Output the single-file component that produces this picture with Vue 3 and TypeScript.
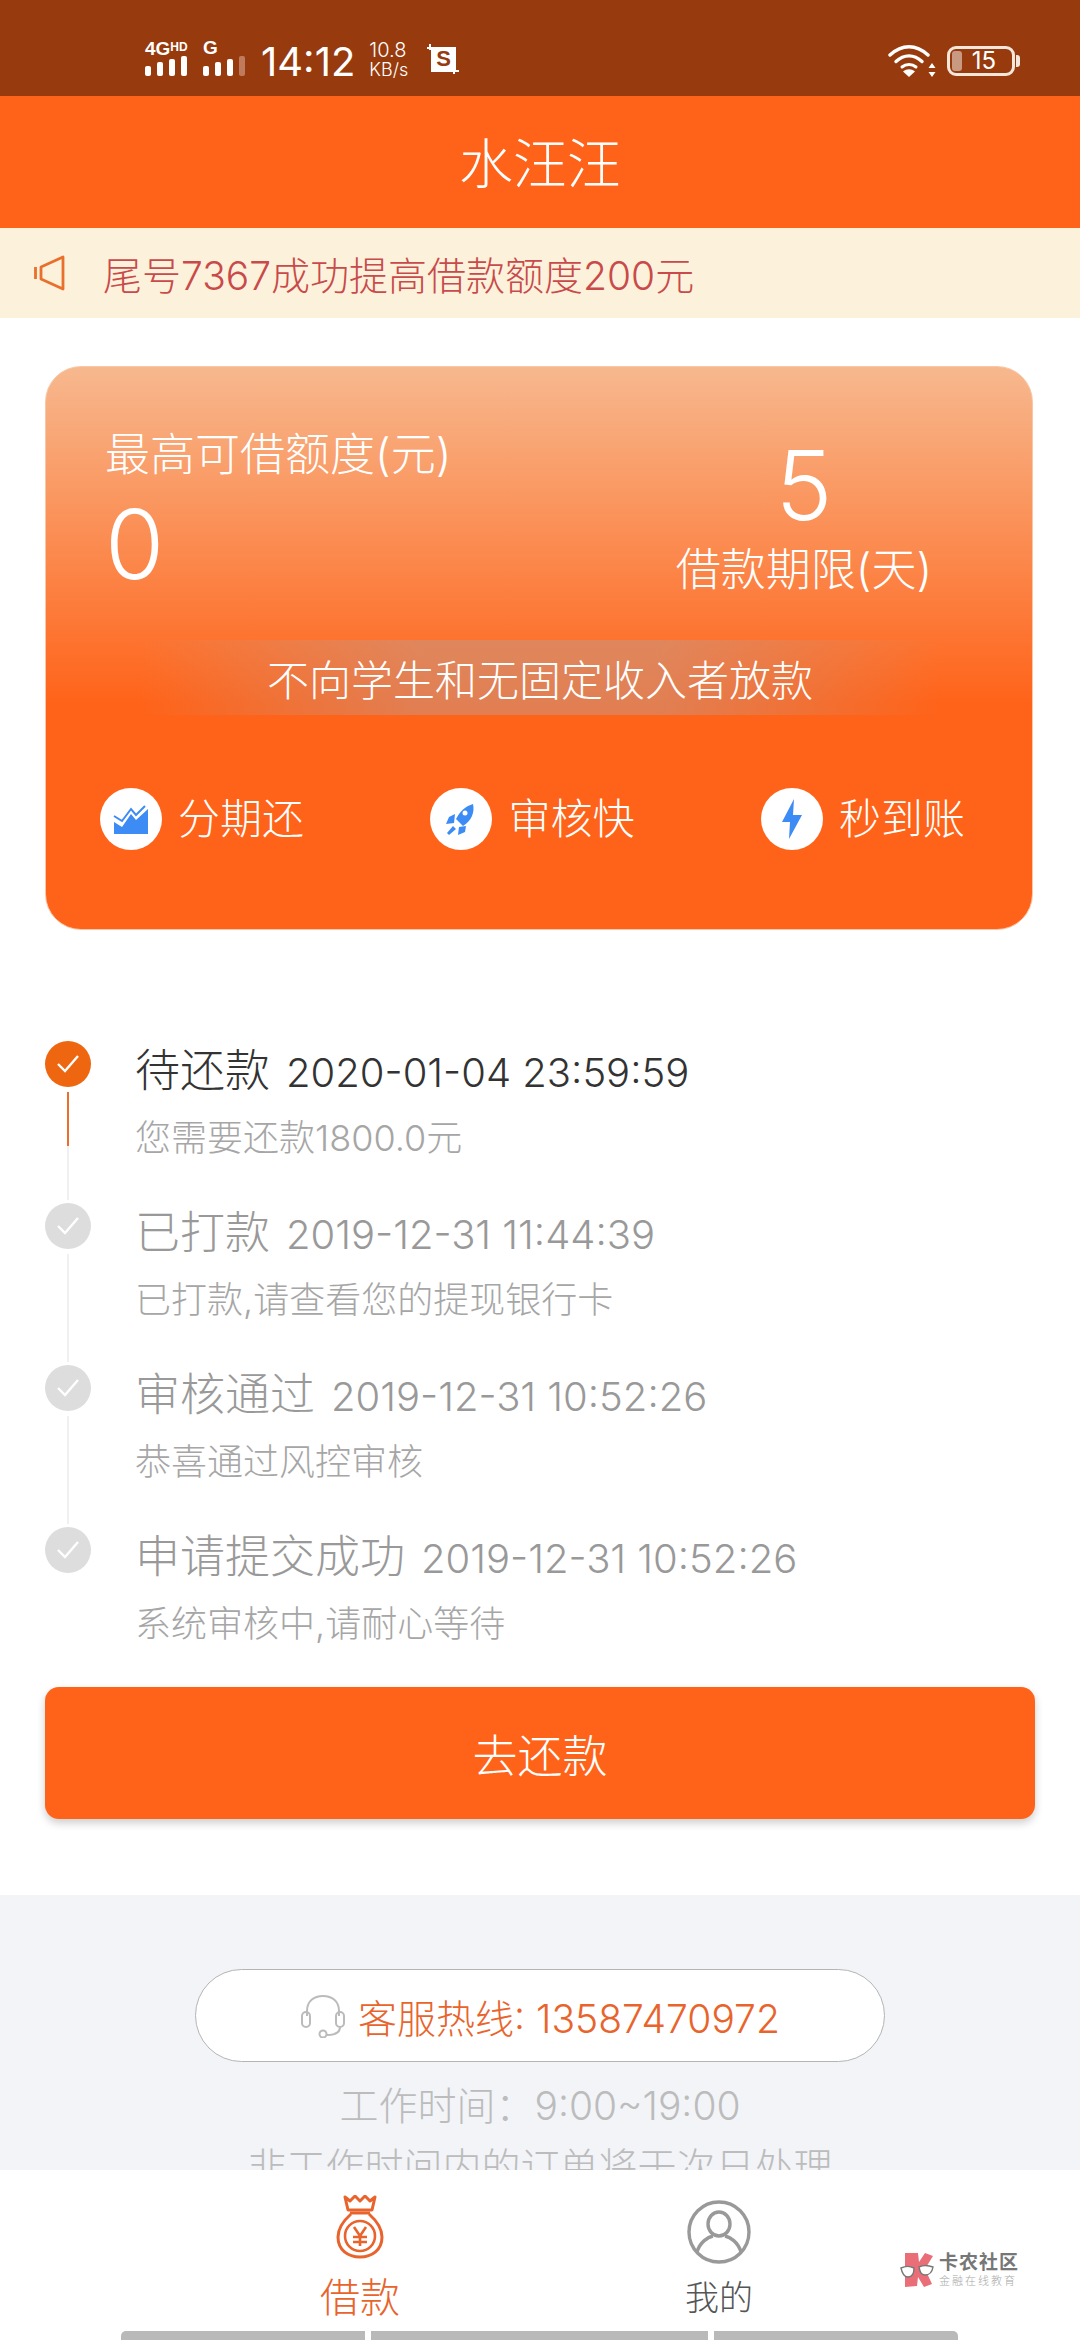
<template>
  <div class="phone">
    <div class="status-bar">
      <div class="signal">
        <div class="net"><span class="net-4g">4G</span><span class="net-hd">HD</span></div>
        <div class="bars">
          <i style="height: 10px"></i><i style="height: 14px"></i><i style="height: 17px"></i><i style="height: 20px"></i>
        </div>
      </div>
      <div class="signal signal-g">
        <div class="net"><span class="net-4g">G</span></div>
        <div class="bars">
          <i style="height: 10px"></i><i style="height: 14px"></i><i style="height: 17px"></i><i class="off" style="height: 20px"></i>
        </div>
      </div>
      <span class="clock">14:12</span>
      <div class="speed"><span>10.8</span><span class="unit">KB/s</span></div>
      <svg class="shot" width="34" height="32" viewBox="0 0 34 32">
        <path d="M5 3h25v25H5z" fill="#fff" />
        <path d="M1 4h6M4 0v6M28 30v-5M26 27h7" stroke="#fff" stroke-width="2" fill="none" />
        <text x="17.5" y="22" text-anchor="middle" class="shot-s">S</text>
      </svg>
      <div class="status-right">
        <svg width="48" height="34" viewBox="0 0 48 34">
          <path d="M2 11C14 0 28 0 40 11" stroke="#fff" stroke-width="3.4" fill="none" stroke-linecap="round" />
          <path d="M8 17.500C16 10 26 10 34 17.500" stroke="#fff" stroke-width="3.400" fill="none" stroke-linecap="round" />
          <path d="M14 23C18 19.500 24 19.500 28 23" stroke="#fff" stroke-width="3" fill="none" stroke-linecap="round" />
          <path d="M15 27.500C19 24.500 23 24.500 27 27.500L21 33z" fill="#fff" />
          <path d="M44 19l3.500 5h-7zM44 33l3.500-5h-7z" fill="#fff" />
        </svg>
        <div class="battery">
          <span class="battery-fill"></span>
          <span class="battery-num">15</span>
        </div>
        <span class="battery-cap"></span>
      </div>
    </div>

    <header class="title-bar">水汪汪</header>

    <div class="notice">
      <svg width="34" height="36" viewBox="0 0 34 36">
        <path d="M2.500 12v12M8 12L30 2v32L8 24z" fill="none" stroke="#e8702c" stroke-width="2.800" stroke-linejoin="round" />
      </svg>
      <span>尾号7367成功提高借款额度200元</span>
    </div>

    <main class="content">
      <section class="card">
        <div class="card-top">
          <div class="quota">
            <div class="card-label">最高可借额度(元)</div>
            <div class="card-num">0</div>
          </div>
          <div class="term">
            <div class="card-num">5</div>
            <div class="card-label">借款期限(天)</div>
          </div>
        </div>
        <div class="slogan">不向学生和无固定收入者放款</div>
        <div class="features">
          <div class="feature">
            <span class="feature-icon">
              <svg width="36" height="36" viewBox="0 0 36 36">
                <path d="M1 33V21l8 5 9-13 5 6 12-11v25z" fill="#3d8bf5" />
                <path d="M1 15l8 5 9-12 5 6 9-9" fill="none" stroke="#3d8bf5" stroke-width="2" />
              </svg>
            </span>
            <span>分期还</span>
          </div>
          <div class="feature">
            <span class="feature-icon">
              <svg width="36" height="36" viewBox="0 0 36 36">
                <path d="M30 3c2 9-2 17-10 22l-7-7C17 10 23 5 30 3z" fill="#3d8bf5" />
                <path d="M12 13l-6 3-3 7 8-1zM23 25l-1 6-7 3 1-8zM10 25l3 3-7 6-2-2z" fill="#3d8bf5" />
                <circle cx="22" cy="12" r="2.500" fill="#fff" />
              </svg>
            </span>
            <span>审核快</span>
          </div>
          <div class="feature">
            <span class="feature-icon">
              <svg width="36" height="44" viewBox="0 0 36 44">
                <path d="M20 2L8 25h8l-1 17 13-24h-9z" fill="#3d8bf5" />
              </svg>
            </span>
            <span>秒到账</span>
          </div>
        </div>
      </section>

      <ul class="timeline">
        <li v-for="(step, i) in steps" :key="step.name" class="step" :class="{ active: i === 0 }">
          <div class="rail">
            <span class="dot">
              <svg width="26" height="22" viewBox="0 0 26 22">
                <path d="M3 11l7 7L23 3" fill="none" stroke="#fff" stroke-width="2.400" />
              </svg>
            </span>
            <span v-if="i < steps.length - 1" class="line"></span>
          </div>
          <div class="step-body">
            <div class="step-head">
              <span class="step-name">{{ step.name }}</span>
              <span class="step-time">{{ step.time }}</span>
            </div>
            <div class="step-desc">{{ step.desc }}</div>
          </div>
        </li>
      </ul>

      <button class="repay">去还款</button>
    </main>

    <section class="service">
      <div class="hotline">
        <svg width="46" height="44" viewBox="0 0 46 44">
          <path d="M7 22V17C7 7 14 2 23 2s16 5 16 15v5" fill="none" stroke="#bbb" stroke-width="2" />
          <rect x="2" y="18" width="8" height="15" rx="4" fill="none" stroke="#bbb" stroke-width="2" />
          <rect x="36" y="18" width="8" height="15" rx="4" fill="none" stroke="#bbb" stroke-width="2" />
          <path d="M40 33c0 6-6 8-13 8" fill="none" stroke="#bbb" stroke-width="2" />
          <circle cx="23" cy="40" r="3.500" fill="none" stroke="#bbb" stroke-width="2" />
        </svg>
        <span>客服热线: 13587470972</span>
      </div>
      <p class="work-time">工作时间：9:00~19:00</p>
      <p class="work-time">非工作时间内的订单将于次日处理</p>
    </section>

    <nav class="tab-bar">
      <div class="tab tab-on">
        <svg width="48" height="64" viewBox="0 0 48 64">
          <path d="M9 2l5 4 5-5 5 5 5-5 5 5 5-4-3 13H12z" fill="none" stroke="#e8642c" stroke-width="3" stroke-linejoin="round" />
          <path d="M14 18h20" stroke="#e8642c" stroke-width="3" />
          <path d="M15 19C6 27 2 34 2 42c0 13 10 20 22 20s22-7 22-20c0-8-4-15-13-23" fill="none" stroke="#e8642c" stroke-width="3" />
          <circle cx="24" cy="41" r="15" fill="none" stroke="#e8642c" stroke-width="2.600" />
          <path d="M18 32l6 9 6-9M24 41v10M17 42h14M17 47h14" fill="none" stroke="#e8642c" stroke-width="2.600" />
        </svg>
        <span>借款</span>
      </div>
      <div class="tab tab-me">
        <svg width="64" height="64" viewBox="0 0 64 64">
          <circle cx="32" cy="32" r="30" fill="none" stroke="#999" stroke-width="3.400" />
          <ellipse cx="32" cy="24" rx="11" ry="12" fill="none" stroke="#999" stroke-width="3.400" />
          <path d="M10 52c3-10 11-15 16-16M54 52c-3-10-11-15-16-16" fill="none" stroke="#999" stroke-width="3.400" />
        </svg>
        <span>我的</span>
      </div>
    </nav>

    <div class="watermark">
      <svg width="34" height="36" viewBox="0 0 34 36">
        <path d="M5 1h13l1 9 6-9 8 3-8 13 7 15-8 3-6-10-1 9-12 1z" fill="#ea6e78" />
        <path d="M1 16c4-2 9-2 13 0 0 5-2 9-6 9-4 0-6-4-7-9zM19 15c4-2 9-2 14 0-1 6-4 8-8 8-4 0-5-3-6-8z" fill="#fff" stroke="#777" stroke-width="1.400" />
      </svg>
      <div class="watermark-text">
        <span class="wm-name">卡农社区</span>
        <span class="wm-sub">金融在线教育</span>
      </div>
    </div>

    <div class="gesture">
      <i class="g1"></i><i class="g2"></i><i class="g3"></i>
    </div>
  </div>
</template>

<script setup lang="ts">
interface Step {
  name: string;
  time: string;
  desc: string;
}

const steps: Array<Step> = [
  { name: "待还款", time: "2020-01-04 23:59:59", desc: "您需要还款1800.0元" },
  { name: "已打款", time: "2019-12-31 11:44:39", desc: "已打款,请查看您的提现银行卡" },
  { name: "审核通过", time: "2019-12-31 10:52:26", desc: "恭喜通过风控审核" },
  { name: "申请提交成功", time: "2019-12-31 10:52:26", desc: "系统审核中,请耐心等待" },
];
</script>

<style>
html,
body {
  margin: 0;
  background: #fff;
}
</style>

<style scoped>
.phone {
  position: relative;
  width: 1080px;
  height: 2340px;
  overflow: hidden;
  background: #fff;
  font-family: Inter, "Noto Sans CJK SC", sans-serif;
  font-weight: 300;
}

.status-bar {
  height: 96px;
  box-sizing: border-box;
  padding: 38px 60px 0 145px;
  display: flex;
  align-items: flex-start;
  background: #973b0e;
  color: #fff;
}

.signal {
  width: 46px;
}

.signal-g {
  margin-left: 12px;
  width: 48px;
}

.net {
  height: 19px;
  line-height: 19px;
  white-space: nowrap;
  font-family: "Liberation Sans", sans-serif;
  font-weight: 700;
}

.net-4g {
  font-size: 19px;
}

.net-hd {
  font-size: 12px;
  vertical-align: 4px;
}

.bars {
  display: flex;
  align-items: flex-end;
  gap: 6px;
  height: 20px;
  margin-top: -1px;
}

.bars i {
  width: 6px;
  border-radius: 2px;
  background: #fff;
}

.bars i.off {
  background: #c07a5c;
}

.clock {
  margin-left: 10px;
  font-size: 40px;
  line-height: 48px;
  font-weight: 400;
}

.speed {
  margin-left: 14px;
  display: flex;
  flex-direction: column;
  font-size: 20px;
  line-height: 19px;
  margin-top: 3px;
}

.speed .unit {
  font-size: 18px;
}

.shot {
  margin-left: 18px;
  margin-top: 6px;
}

.shot-s {
  font-family: "Liberation Sans", sans-serif;
  font-size: 22px;
  font-weight: 700;
  fill: #973b0e;
}

.status-right {
  margin-left: auto;
  display: flex;
  align-items: center;
  margin-top: 6px;
}

.battery {
  position: relative;
  margin-left: 11px;
  width: 68px;
  height: 30px;
  box-sizing: border-box;
  border: 3px solid #f5e6dc;
  border-radius: 9px;
  text-align: center;
  font-size: 24px;
  line-height: 24px;
  font-weight: 400;
}

.battery-fill {
  position: absolute;
  left: 2px;
  top: 2px;
  width: 10px;
  height: 20px;
  border-radius: 3px;
  background: #c89a82;
}

.battery-num {
  margin-left: 6px;
}

.battery-cap {
  width: 4px;
  height: 12px;
  margin-left: 1px;
  border-radius: 0 3px 3px 0;
  background: #f5e6dc;
}

.title-bar {
  height: 132px;
  padding-bottom: 4px;
  box-sizing: border-box;
  display: flex;
  align-items: center;
  justify-content: center;
  background: #ff6319;
  color: #fff;
  font-size: 54px;
}

.notice {
  height: 90px;
  box-sizing: border-box;
  padding: 0 0 0 33px;
  display: flex;
  align-items: center;
  gap: 36px;
  background: #fcf2dc;
  color: #c94a4a;
  font-size: 39px;
}

.content {
  padding: 48px 45px 0;
}

.card {
  box-sizing: border-box;
  width: 988px;
  height: 564px;
  padding: 58px 62px 0 59px;
  border-radius: 36px;
  border: 1px solid #f9c6a6;
  background: linear-gradient(180deg, #f7b88e 0%, #ff6319 60%, #ff6319 100%);
  color: #fff;
}

.card-top {
  display: flex;
  justify-content: space-between;
  height: 215px;
}

.card-label {
  font-size: 45px;
  line-height: 60px;
}

.card-num {
  font-size: 96px;
  line-height: 110px;
  font-weight: 300;
}

.quota .card-num {
  margin-top: 4px;
}

.term {
  width: 300px;
  margin-right: 16px;
  text-align: center;
  padding-top: 5px;
}

.slogan {
  height: 75px;
  margin: 0 30px 0 35px;
  display: flex;
  align-items: center;
  justify-content: center;
  font-size: 42px;
  background: linear-gradient(90deg, rgba(200, 150, 130, 0) 0%, rgba(200, 150, 130, 0.55) 35%, rgba(200, 150, 130, 0.55) 65%, rgba(200, 150, 130, 0) 100%);
}

.features {
  margin: 73px 0 0 -5px;
  display: flex;
  justify-content: space-between;
  width: 865px;
}

.feature {
  display: flex;
  align-items: center;
  gap: 16px;
  font-size: 42px;
  line-height: 62px;
}

.feature-icon {
  width: 62px;
  height: 62px;
  border-radius: 50%;
  background: #fff;
  display: flex;
  align-items: center;
  justify-content: center;
}

.timeline {
  list-style: none;
  margin: 111px 0 0;
  padding: 0;
}

.step {
  display: flex;
  height: 162px;
  gap: 44px;
  color: #999;
}

.step:last-child {
  height: 160px;
}

.rail {
  width: 46px;
  display: flex;
  flex-direction: column;
  align-items: center;
}

.dot {
  flex: none;
  width: 46px;
  height: 46px;
  border-radius: 50%;
  background: #ddd;
  display: flex;
  align-items: center;
  justify-content: center;
}

.active .dot {
  background: #ee6610;
}

.line {
  flex: 1;
  width: 2px;
  margin: 5px 0 3px;
  background: #f0f0f0;
}

.active .line {
  background: linear-gradient(180deg, #e8702c 0, #e8702c 54px, #f0f0f0 54px);
}

.step-body {
  flex: 1;
  min-width: 0;
}

.step-head {
  display: flex;
  align-items: baseline;
  gap: 16px;
  height: 60px;
  line-height: 60px;
}

.active .step-head {
  color: #333;
}

.step-name {
  font-size: 45px;
}

.step-time {
  font-size: 40px;
}

.step-desc {
  margin-top: 7px;
  font-size: 36px;
  line-height: 60px;
  color: #a6a6a6;
}

.repay {
  display: block;
  width: 990px;
  height: 132px;
  margin: 0;
  border: none;
  border-radius: 14px;
  background: #ff6319;
  color: #fff;
  font-family: inherit;
  font-weight: 300;
  font-size: 45px;
  box-shadow: 0 4px 8px rgba(0, 0, 0, 0.2);
}

.service {
  position: absolute;
  left: 0;
  right: 0;
  top: 1895px;
  bottom: 0;
  padding-top: 74px;
  background: #f2f4f8;
  text-align: center;
}

.hotline {
  box-sizing: border-box;
  width: 690px;
  height: 93px;
  margin: 0 auto;
  border: 1px solid #b4b4b4;
  border-radius: 47px;
  background: #fff;
  display: flex;
  align-items: center;
  justify-content: center;
  gap: 12px;
  color: #e8642c;
  font-size: 39px;
}

.work-time {
  margin: 0;
  color: #bcbcbc;
  font-size: 39px;
  line-height: 61px;
}

.hotline + .work-time {
  margin-top: 13px;
}

.tab-bar {
  position: absolute;
  left: 0;
  right: 0;
  bottom: 0;
  height: 170px;
  background: #fff;
  display: flex;
  padding-left: 260px;
  box-sizing: border-box;
}

.tab {
  width: 200px;
  height: 170px;
  display: flex;
  flex-direction: column;
  align-items: center;
  box-sizing: border-box;
}

.tab-on {
  padding-top: 25px;
  color: #e8642c;
  font-size: 40px;
  line-height: 50px;
}

.tab-on span {
  margin-top: 14px;
}

.tab-me {
  margin-left: 159px;
  padding-top: 30px;
  color: #555;
  font-size: 34px;
  line-height: 44px;
}

.tab-me span {
  margin-top: 12px;
}

.watermark {
  position: absolute;
  left: 900px;
  top: 2252px;
  display: flex;
  align-items: center;
  gap: 5px;
}

.watermark-text {
  display: flex;
  flex-direction: column;
  color: #777;
}

.wm-name {
  font-size: 19px;
  line-height: 22px;
  font-weight: 700;
  letter-spacing: 1px;
}

.wm-sub {
  font-size: 11px;
  line-height: 14px;
  letter-spacing: 2px;
  color: #aaa;
}

.gesture {
  position: absolute;
  left: 121px;
  bottom: 0;
  display: flex;
  gap: 6px;
}

.gesture i {
  height: 9px;
  background: #b9b9b9;
}

.g1 {
  width: 244px;
  border-radius: 5px 0 0 0;
}

.g2 {
  width: 337px;
}

.g3 {
  width: 244px;
  border-radius: 0 5px 0 0;
}
</style>
